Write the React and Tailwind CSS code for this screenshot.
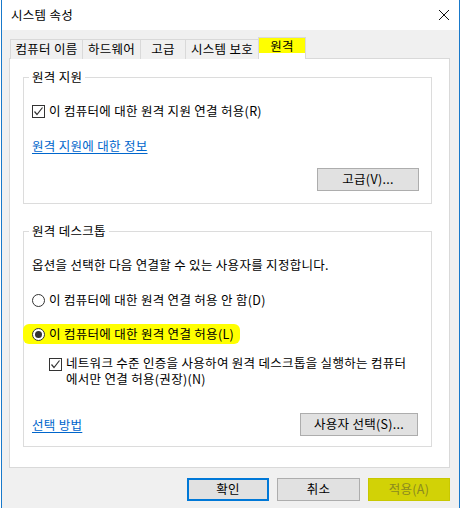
const font = { fontFamily: '"Noto Sans CJK KR", "Noto Sans", sans-serif' };

const CheckBox = () => (
  <span className="inline-flex h-[13px] w-[13px] shrink-0 items-center justify-center border border-[#333333] bg-white">
    <svg width="11" height="11" viewBox="0 0 11 11">
      <path d="M1.5 5.5 L4 8.5 L9.5 1.5" fill="none" stroke="#333333" strokeWidth="1.2" />
    </svg>
  </span>
);

const Radio = ({ checked }) => (
  <span className="inline-flex h-[13px] w-[13px] shrink-0 items-center justify-center rounded-full border border-[#333333] bg-white">
    {checked && <span className="h-[7px] w-[7px] rounded-full bg-[#333333]"></span>}
  </span>
);

const Button = ({ children, className = "" }) => (
  <button
    className={`flex h-[23px] items-center justify-center border text-[12.5px] leading-none tracking-[0.3px] ${className}`}
  >
    {children}
  </button>
);

const Group = ({ title, children, className = "" }) => (
  <fieldset className={`border border-[#dcdcdc] ${className}`}>
    <legend className="ml-[5px] px-[3px] text-[12.5px] leading-[16px] tracking-[0.3px]">{title}</legend>
    {children}
  </fieldset>
);

const tabs = ["컴퓨터 이름", "하드웨어", "고급", "시스템 보호"];
const tabWidths = ["w-[72px]", "w-[58px]", "w-[45px]", "w-[73px]"];

export default function App() {
  return (
    <div className="h-[508px] w-[460px] overflow-hidden bg-white text-black" style={font}>
      <div className="ml-[1px] flex h-full w-[459px] flex-col border-x border-[#1979ca]">
        <div name="title-bar" className="flex h-[30px] shrink-0 items-center justify-between bg-white pl-[9px] pr-[8px]">
          <span className="pt-[1px] text-[12.5px] tracking-[0.3px]">시스템 속성</span>
          <svg width="12" height="12" viewBox="0 0 12 12" className="mr-[1px]">
            <path d="M1 1 L11 11 M11 1 L1 11" stroke="#111" strokeWidth="1" />
          </svg>
        </div>

        <div name="body" className="flex flex-1 flex-col bg-[#f0f0f0] pl-[7px] pr-[9px] pt-[7px]">
          <div name="tabs" className="relative z-10 -mb-px ml-[1px] flex h-[22px] items-end text-[12.5px] tracking-[0.3px]">
            {tabs.map((t, i) => (
              <div
                key={t}
                className={`flex h-[20px] ${tabWidths[i]} items-center justify-center border border-r-0 border-b-0 border-[#d9d9d9] bg-[#f0f0f0] pb-[1px]`}
              >
                {t}
              </div>
            ))}
            <div className="flex h-[22px] w-[48px] flex-col border border-b-0 border-[#d9d9d9] bg-white">
              <div className="flex h-[15px] items-center justify-center bg-[#ffff00] pt-[1px]">원격</div>
            </div>
          </div>

          <div name="panel" className="flex h-[410px] flex-col border border-[#d9d9d9] bg-white pb-[19px] pl-[13px] pr-[17px] pt-[10px]">
            <Group title="원격 지원">
              <div className="flex flex-col px-[8px] pb-[12px] pt-[18px] text-[12.5px] tracking-[0.3px]">
                <div className="flex h-[16px] items-center gap-[4px] leading-[16px]">
                  <CheckBox />
                  <span>이 컴퓨터에 대한 원격 지원 연결 허용(R)</span>
                </div>
                <a className="mt-[19px] w-fit leading-[16px] text-[#0066cc] underline underline-offset-2">
                  원격 지원에 대한 정보
                </a>
                <div className="mt-[14px] flex justify-end pr-[4px]">
                  <Button className="w-[102px] border-[#adadad] bg-[#e1e1e1]">고급(V)...</Button>
                </div>
              </div>
            </Group>

            <Group title="원격 데스크톱" className="mt-[19px]">
              <div className="flex flex-col px-[8px] pb-[10px] pt-[18px] text-[12.5px] leading-[16px] tracking-[0.3px]">
                <div>옵션을 선택한 다음 연결할 수 있는 사용자를 지정합니다.</div>
                <div className="mt-[19px] flex h-[16px] items-center gap-[4px]">
                  <Radio />
                  <span>이 컴퓨터에 대한 원격 연결 허용 안 함(D)</span>
                </div>
                <div className="-ml-[9px] mt-[16px] flex h-[20px] w-fit items-center gap-[4px] rounded-[6px] bg-[#ffff00] pl-[9px] pr-[6px]">
                  <Radio checked />
                  <span>이 컴퓨터에 대한 원격 연결 허용(L)</span>
                </div>
                <div className="ml-[17px] mt-[11px] flex gap-[4px] leading-[16px]">
                  <div className="pt-[2px]">
                    <CheckBox />
                  </div>
                  <span className="w-[345px]">
                    네트워크 수준 인증을 사용하여 원격 데스크톱을 실행하는 컴퓨터
                    <br />
                    에서만 연결 허용(권장)(N)
                  </span>
                </div>
                <div className="mt-[26px] flex items-center justify-between pr-[5px]">
                  <a className="text-[#0066cc] underline underline-offset-2">선택 방법</a>
                  <Button className="w-[118px] border-[#adadad] bg-[#e1e1e1]">사용자 선택(S)...</Button>
                </div>
              </div>
            </Group>
          </div>

          <div name="footer" className="mt-[10px] flex justify-end gap-[8px]">
            <Button className="w-[82px] border-2 border-[#0078d7] bg-[#e1e1e1]">확인</Button>
            <Button className="w-[83px] border-[#adadad] bg-[#e1e1e1]">취소</Button>
            <Button className="w-[82px] border-[#c8c800] bg-[#d2d206] text-[#8a8a20]">적용(A)</Button>
          </div>
        </div>
      </div>
    </div>
  );
}
